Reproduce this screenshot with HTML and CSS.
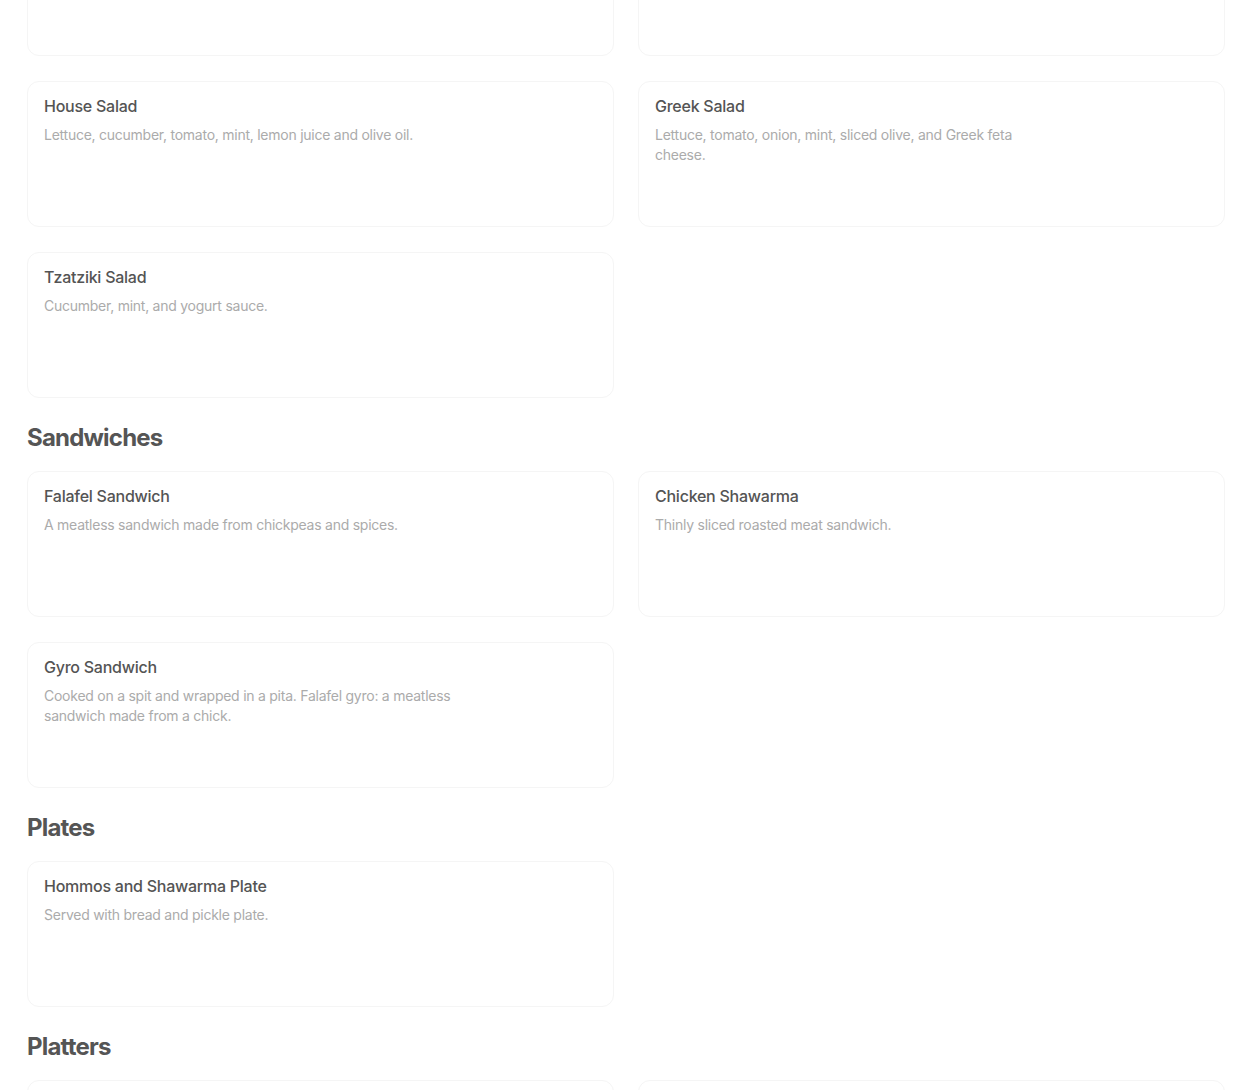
FILE: index.html
```html
<!DOCTYPE html>
<html lang="en">
<head>
<meta charset="utf-8">
<title>Menu</title>
<link rel="stylesheet" href="styles.css">
</head>
<body>
<main class="menu">
  <section class="section section-first">
    <div class="grid">
      <div class="card"><div class="info"><h3 class="name">Fattoush Salad</h3><p class="desc">Lettuce, tomato, cucumber, onion, mint and toasted pita.</p></div></div>
      <div class="card"><div class="info"><h3 class="name">Tabbouleh Salad</h3><p class="desc">Parsley, bulgur, tomato, onion, mint and lemon juice.</p></div></div>
      <div class="card"><div class="info"><h3 class="name">House Salad</h3><p class="desc">Lettuce, cucumber, tomato, mint, lemon juice and olive oil.</p></div></div>
      <div class="card"><div class="info"><h3 class="name">Greek Salad</h3><p class="desc">Lettuce, tomato, onion, mint, sliced olive, and Greek feta cheese.</p></div></div>
      <div class="card"><div class="info"><h3 class="name">Tzatziki Salad</h3><p class="desc">Cucumber, mint, and yogurt sauce.</p></div></div>
    </div>
  </section>
  <section class="section">
    <h2 class="heading">Sandwiches</h2>
    <div class="grid">
      <div class="card"><div class="info"><h3 class="name">Falafel Sandwich</h3><p class="desc">A meatless sandwich made from chickpeas and spices.</p></div></div>
      <div class="card"><div class="info"><h3 class="name">Chicken Shawarma</h3><p class="desc">Thinly sliced roasted meat sandwich.</p></div></div>
      <div class="card"><div class="info"><h3 class="name">Gyro Sandwich</h3><p class="desc">Cooked on a spit and wrapped in a pita. Falafel gyro: a meatless sandwich made from a chick.</p></div></div>
    </div>
  </section>
  <section class="section">
    <h2 class="heading">Plates</h2>
    <div class="grid">
      <div class="card"><div class="info"><h3 class="name">Hommos and Shawarma Plate</h3><p class="desc">Served with bread and pickle plate.</p></div></div>
    </div>
  </section>
  <section class="section">
    <h2 class="heading">Platters</h2>
    <div class="grid">
      <div class="card"><div class="info"><h3 class="name">Family Platter</h3><p class="desc">Served with rice, salad and bread.</p></div></div>
      <div class="card"><div class="info"><h3 class="name">Mixed Grill Platter</h3><p class="desc">Served with rice, salad and bread.</p></div></div>
    </div>
  </section>
</main>
</body>
</html>
```
FILE: styles.css
```css
html, body {
  margin: 0;
  padding: 0;
  background: #ffffff;
}
body {
  font-family: Inter, "Noto Sans", Arial, sans-serif;
  overflow: hidden;
}
.menu {
  padding: 0 25px 0 27px;
  margin-top: -90px;
}
.heading {
  margin: 24px 0 17px;
  font-size: 24px;
  line-height: 32px;
  font-weight: 700;
  color: #555555;
  letter-spacing: -0.8px;
}
.grid {
  display: grid;
  grid-template-columns: 1fr 1fr;
  gap: 25px 24px;
}
.card {
  box-sizing: border-box;
  height: 146px;
  border: 1px solid #f5f5f5;
  border-radius: 12px;
  padding: 14px 16px;
  background: #ffffff;
}
.info {
  max-width: 409px;
}
.name {
  margin: 0 0 9px;
  font-size: 16px;
  line-height: 20px;
  font-weight: 500;
  color: #545454;
  letter-spacing: -0.25px;
}
.desc {
  margin: 0;
  font-size: 14px;
  line-height: 20px;
  font-weight: 400;
  color: #ababab;
  letter-spacing: -0.25px;
}
```
